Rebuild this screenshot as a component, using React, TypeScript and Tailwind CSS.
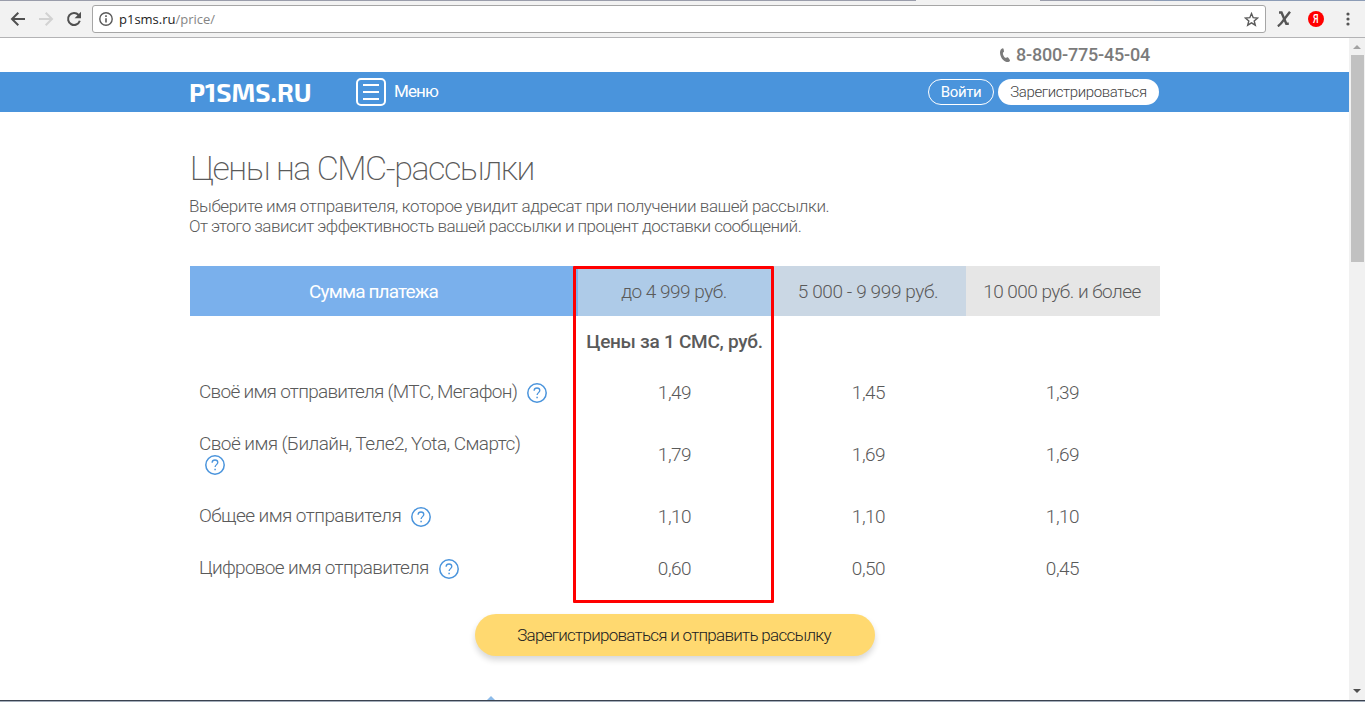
import type { ReactNode } from "react";
import clsx from "clsx";

interface PriceRow {
  label: string;
  labelClass: string;
  prices: string[];
  height: string;
  wrapHelp?: boolean;
}

const ROWS: PriceRow[] = [
  { label: "Своё имя отправителя (МТС, Мегафон)", labelClass: "tracking-[-0.72px]", prices: ["1,49", "1,45", "1,39"], height: "h-[52px]" },
  { label: "Своё имя (Билайн, Теле2, Yota, Смартс)", labelClass: "tracking-[-0.56px]", prices: ["1,79", "1,69", "1,69"], height: "h-[72px]", wrapHelp: true },
  { label: "Общее имя отправителя", labelClass: "tracking-[-0.55px]", prices: ["1,10", "1,10", "1,10"], height: "h-[52px]" },
  { label: "Цифровое имя отправителя", labelClass: "tracking-[-0.67px]", prices: ["0,60", "0,50", "0,45"], height: "h-[52px]" },
];

function HelpIcon({ className }: { className?: string }) {
  return (
    <svg className={clsx("shrink-0", className)} width="20" height="20" viewBox="0 0 20 20" fill="none" stroke="#4a94dc">
      <circle cx="10" cy="10" r="9.2" strokeWidth="1.5" />
      <path d="M7.1 7.7c.1-1.7 1.2-2.7 2.9-2.7s2.8 1 2.8 2.5c0 2-2.7 2.3-2.7 4.6" strokeWidth="1.3" />
      <path d="M10.1 13.7v1.6" strokeWidth="1.5" />
    </svg>
  );
}

function BrowserBar() {
  return (
    <div className="flex h-[38px] w-full shrink-0 flex-col border-b border-[#b3b3b5] bg-[#f2f2f2]">
      <div className="flex h-px bg-[#8c9cb6]">
        <div className="w-[916px] bg-[#9a9dab]" />
        <div className="w-[124px] bg-[#f2f2f2]" />
        <div className="w-[114px] bg-[#9a9dab]" />
      </div>
      <div className="flex h-9 items-center">
        <svg className="ml-[10px]" width="16" height="16" viewBox="0 0 16 16" fill="none" stroke="#505050" strokeWidth="2">
          <path d="M15 8H2.5M8.3 1.7L2 8l6.3 6.3" />
        </svg>
        <svg className="ml-3" width="16" height="16" viewBox="0 0 16 16" fill="none" stroke="#d2d2d2" strokeWidth="2">
          <path d="M1 8h12.5M7.7 1.7L14 8l-6.3 6.3" />
        </svg>
        <svg className="ml-3" width="16" height="16" viewBox="0 0 16 16">
          <path d="M12.6 4A6 6 0 1 0 13.8 9.8" fill="none" stroke="#505050" strokeWidth="2" />
          <path d="M15 .8v6.4H8.6z" fill="#505050" />
        </svg>
        <div className="ml-[10px] flex h-7 w-[1174px] items-center rounded-[3px] border border-[#a6a6a6] bg-white">
          <svg className="ml-[6px]" width="14" height="14" viewBox="0 0 14 14" fill="none" stroke="#5a5a5a">
            <circle cx="7" cy="7" r="6.2" strokeWidth="1.4" />
            <path d="M7 6.2v4.3M7 3.3v1.6" strokeWidth="1.6" />
          </svg>
          <span className="ml-[6px] font-['Open_Sans',sans-serif] text-[13px] leading-none text-[#858585]">
            <span className="text-[#1c1c1c]">p1sms.ru</span>/price/
          </span>
          <svg className="mr-[6px] ml-auto" width="15" height="15" viewBox="0 0 15 15" fill="none" stroke="#5a5a5a" strokeWidth="1.4">
            <path d="M7.5 1.6l1.7 4.1 4.4.3-3.4 2.9 1.1 4.3-3.8-2.4-3.8 2.4 1.1-4.3L1.4 6l4.4-.3z" />
          </svg>
        </div>
        <svg className="ml-[11px]" width="14" height="16" viewBox="0 0 14 16" fill="none" stroke="#555">
          <path d="M2 1.5h2.5l4.8 11.3h2.5" strokeWidth="2.4" />
          <path d="M13 .8L7 8.5C5 11.5 3.5 13.8.8 15.2" strokeWidth="2.4" />
        </svg>
        <div className="ml-[17px] flex size-4 items-center justify-center rounded-full bg-[#ff0000] font-['Roboto',sans-serif] text-[12px] leading-none font-medium text-white">
          <span className="scale-x-75">Я</span>
        </div>
        <svg className="ml-[22px]" width="4" height="14" viewBox="0 0 4 14" fill="#555">
          <circle cx="2" cy="2" r="1.6" />
          <circle cx="2" cy="7" r="1.6" />
          <circle cx="2" cy="12" r="1.6" />
        </svg>
      </div>
    </div>
  );
}

function Header() {
  return (
    <>
      <div className="flex h-[34px] items-center pl-[1000px]">
        <svg width="10" height="15" viewBox="0 0 10 15" fill="#7b7b7b">
          <path d="M2.8.2c.9-.2 1.5 3.5 1 3.9-.6.5-.9.6-.9 1.3 0 1.7 1.3 3.7 2.5 4.4.9.5 1.4-.5 2-.5.8 0 2.8 2.7 2.6 3.4-.3.9-2 1.7-3.4 1.3C3.1 13.2.1 9.2 0 4.6 0 2 1.3.5 2.8.2z" />
        </svg>
        <span className="ml-[6px] text-[18px] leading-none font-medium tracking-[-0.2px] text-[#7b7b7b]">8-800-775-45-04</span>
      </div>
      <div className="flex h-10 items-center bg-[#4a94dc] pl-[189px] text-white">
        <span className="w-[167px] font-['Exo_2','Open_Sans',sans-serif] text-[26px] leading-none font-bold">
          P1SMS.RU
        </span>
        <div className="flex h-7 w-[30px] flex-col items-center justify-center gap-[5px] rounded-[5px] border-2 border-white">
          <div className="h-[2px] w-4 bg-white" />
          <div className="h-[2px] w-4 bg-white" />
          <div className="h-[2px] w-4 bg-white" />
        </div>
        <span className="ml-2 w-[534px] pb-[2px] text-[17px] leading-none tracking-[-0.9px]">Меню</span>
        <div className="flex h-[26px] w-[66px] items-center justify-center rounded-full border border-white text-[15px] leading-none tracking-[-0.4px]">
          Войти
        </div>
        <div className="ml-1 flex h-[26px] w-[161px] items-center justify-center rounded-full bg-white text-[15px] leading-none font-light tracking-[-0.4px] whitespace-nowrap text-[#444]">
          Зарегистрироваться
        </div>
      </div>
    </>
  );
}

function HeadCell({ className, children }: { className: string; children: ReactNode }) {
  return <div className={clsx("flex items-center justify-center pt-[2px] whitespace-nowrap", className)}>{children}</div>;
}

function PriceTable() {
  return (
    <div className="relative mt-[30px] text-[19px] leading-[22px] font-light">
      <div className="grid h-[50px] grid-cols-[388px_194px_194px_194px]">
        <HeadCell className="bg-[#7ab0ec] pr-[21px] font-normal tracking-[-0.87px] text-white">Сумма платежа</HeadCell>
        <HeadCell className="bg-[#aecbe8] pr-[2px] tracking-[-0.5px]">до 4 999 руб.</HeadCell>
        <HeadCell className="bg-[#cad7e4] pr-[2px] tracking-[-0.38px]">5 000 - 9 999 руб.</HeadCell>
        <HeadCell className="bg-[#e6e6e6] pr-[2px] tracking-[-0.53px]">10 000 руб. и более</HeadCell>
      </div>
      <div className="ml-[388px] flex h-[50px] w-[194px] items-center justify-center pt-[2px] pr-px font-medium tracking-[-0.27px] whitespace-nowrap">
        Цены за 1 СМС, руб.
      </div>
      {ROWS.map((row) => (
        <div key={row.label} className={clsx("grid grid-cols-[388px_194px_194px_194px] items-center", row.height)}>
          <div className={clsx("flex pl-[9px] whitespace-nowrap", row.wrapHelp ? "flex-col" : "items-center")}>
            <span className={row.labelClass}>{row.label}</span>
            <HelpIcon className={row.wrapHelp ? "ml-[6px]" : "mt-[2px] ml-[10px]"} />
          </div>
          {row.prices.map((price, i) => (
            <div key={i} className="pt-px pr-px text-center tracking-[-0.5px]">
              {price}
            </div>
          ))}
        </div>
      ))}
      <div className="absolute top-0 left-[383px] h-[337px] w-[201px] rounded-[1px] border-3 border-[#ff0000]" />
    </div>
  );
}

function Scrollbar() {
  return (
    <div className="flex w-4 shrink-0 flex-col items-center bg-[#f1f1f1]">
      <svg className="mt-[7px]" width="8" height="4" viewBox="0 0 8 4" fill="#a3a3a3">
        <path d="M4 0l4 4H0z" />
      </svg>
      <div className="mt-[6px] h-[207px] w-[13px] bg-[#c1c1c1]" />
      <svg className="mt-auto mb-[7px]" width="8" height="4" viewBox="0 0 8 4" fill="#505050">
        <path d="M4 4L0 0h8z" />
      </svg>
    </div>
  );
}

export default function App() {
  return (
    <div className="flex h-[702px] w-[1365px] flex-col overflow-hidden bg-white font-['Roboto',sans-serif] text-[#5a5a5a]">
      <BrowserBar />
      <div className="flex min-h-0 flex-1">
        <div className="flex w-[1349px] flex-col">
          <Header />
          <main className="ml-[190px] flex w-[970px] flex-1 flex-col pt-9">
            <h1 className="text-[34px] leading-[40px] font-extralight tracking-[-1.45px] whitespace-nowrap">Цены на СМС-рассылки</h1>
            <p className="mt-2 -ml-px text-[17px] leading-5 font-light whitespace-nowrap">
              <span className="tracking-[-0.4px]">Выберите имя отправителя, которое увидит адресат при получении вашей рассылки.</span>
              <br />
              <span className="tracking-[-0.54px]">От этого зависит эффективность вашей рассылки и процент доставки сообщений.</span>
            </p>
            <PriceTable />
            <button className="mt-5 ml-[285px] h-[42px] w-[400px] shrink-0 rounded-full bg-[#ffd970] pt-px pr-[2px] text-[17px] font-light tracking-[-0.72px] whitespace-nowrap text-[#222] shadow-[0_4px_6px_rgba(0,0,0,0.16)]">
              Зарегистрироваться и отправить рассылку
            </button>
            <svg className="mt-auto ml-[297px]" width="8" height="4" viewBox="0 0 8 4" fill="#8dbbe9">
              <path d="M4 0l4 4H0z" />
            </svg>
          </main>
        </div>
        <Scrollbar />
      </div>
      <div className="h-px shrink-0 bg-[#3a4250]" />
      <div className="h-px shrink-0 bg-[#a3adba]" />
    </div>
  );
}
